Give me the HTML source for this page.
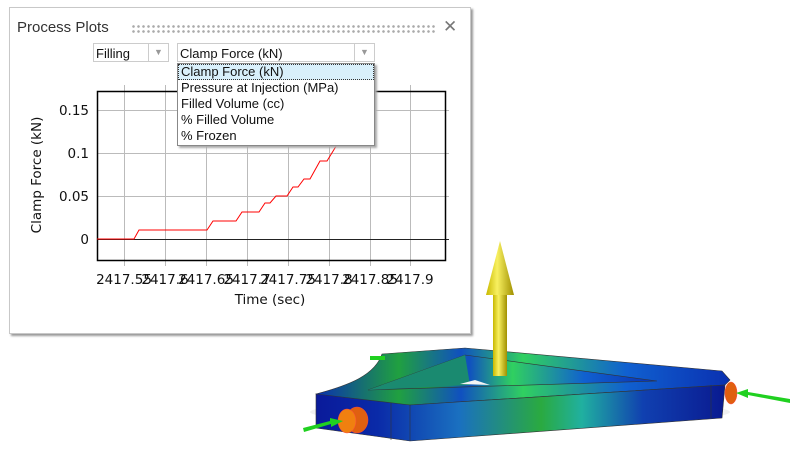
<!DOCTYPE html>
<html><head><style>
body{margin:0;width:797px;height:458px;background:#fff;position:relative;overflow:hidden;font-family:"DejaVu Sans","Liberation Sans",sans-serif;}
.panel{position:absolute;left:9px;top:7px;width:460px;height:325px;background:#fff;border:1px solid #c8c8c8;box-shadow:2px 2px 2px #999;}
.title{position:absolute;left:17px;top:19px;font-size:15px;color:#333;font-family:"Liberation Sans",sans-serif;}
.dots{position:absolute;left:131px;top:24px;width:304px;height:10px;background-image:radial-gradient(circle,#aaa 1.1px,transparent 1.5px);background-size:5px 5px;}
.x{position:absolute;left:443px;top:17px;font-size:17px;color:#777;font-family:"Liberation Sans",sans-serif;}
.sel{position:absolute;height:19px;border:1px solid #ccc;background:#fff;font-family:"Liberation Sans",sans-serif;font-size:13px;line-height:19px;padding-left:2px;box-sizing:border-box;color:#111}
.arr{position:absolute;right:0;top:0;width:19px;height:17px;border-left:1px solid #ccc;color:#999;font-size:9px;text-align:center;line-height:17px}
.dd{position:absolute;left:177px;top:63px;width:198px;height:83px;background:#fff;border:1px solid #888;box-shadow:2px 2px 2px #aaa;font-family:"Liberation Sans",sans-serif;font-size:13px;color:#111;box-sizing:border-box}
.dd div{height:16px;line-height:15px;padding-left:3px}
.dd .hl{background:#d9f0fb;outline:1px dotted #333;outline-offset:-1px}
</style></head><body>
<div class="panel"></div>
<div class="title">Process Plots</div>
<div class="dots"></div>
<div class="x">✕</div>
<div class="sel" style="left:93px;top:43px;width:76px">Filling<div class="arr">▼</div></div>
<div class="sel" style="left:177px;top:43px;width:198px">Clamp Force (kN)<div class="arr">▼</div></div>
<svg style="position:absolute;left:0;top:0" width="797" height="458">
<g stroke="#bbb" stroke-width="1">
<line x1="124.5" y1="85" x2="124.5" y2="266"/><line x1="165.5" y1="85" x2="165.5" y2="266"/><line x1="206.5" y1="85" x2="206.5" y2="266"/><line x1="247.5" y1="85" x2="247.5" y2="266"/><line x1="288.5" y1="85" x2="288.5" y2="266"/><line x1="329.5" y1="85" x2="329.5" y2="266"/><line x1="370.5" y1="85" x2="370.5" y2="266"/><line x1="410.5" y1="85" x2="410.5" y2="266"/>
<line x1="97" y1="110.5" x2="449" y2="110.5"/><line x1="97" y1="153.5" x2="449" y2="153.5"/><line x1="97" y1="196.5" x2="449" y2="196.5"/>
</g>
<line x1="97" y1="239.5" x2="449" y2="239.5" stroke="#222"/>
<rect x="97.5" y="91.5" width="348" height="169" fill="none" stroke="#000" stroke-width="1.5"/>
<polyline fill="none" stroke="#f00" stroke-width="1" points="97,239 134,239 139,230 207,230 213,221 236,221 242,212 259,212 265,203 270,203 276,196 287,196 293,187 298,187 304,179 310,179 320,161 327,161 338,143 340,140"/>
<g font-size="13.5" fill="#111" text-anchor="end"><text x="89" y="115">0.15</text><text x="89" y="158">0.1</text><text x="89" y="201">0.05</text><text x="89" y="244">0</text></g>
<g font-size="13.5" fill="#111" text-anchor="middle"><text x="124" y="284">2417.55</text><text x="165" y="284">2417.6</text><text x="206" y="284">2417.65</text><text x="247" y="284">2417.7</text><text x="288" y="284">2417.75</text><text x="329" y="284">2417.8</text><text x="370" y="284">2417.85</text><text x="410" y="284">2417.9</text></g>
<text x="270" y="304" font-size="13.5" text-anchor="middle" fill="#111">Time (sec)</text>
<text transform="translate(41,175) rotate(-90)" font-size="13.5" text-anchor="middle" fill="#111">Clamp Force (kN)</text>
<defs>
<linearGradient id="bl" x1="0" x2="1"><stop offset="0" stop-color="#0a1a9a"/><stop offset=".15" stop-color="#0a2aa8"/><stop offset=".35" stop-color="#1a70c0"/><stop offset=".55" stop-color="#2aaa40"/><stop offset=".65" stop-color="#20b0a0"/><stop offset=".8" stop-color="#1040b0"/><stop offset="1" stop-color="#0a1a90"/></linearGradient>
<linearGradient id="tp" x1="0" x2="1"><stop offset="0" stop-color="#0a30b0"/><stop offset=".2" stop-color="#20a040"/><stop offset=".35" stop-color="#1050c0"/><stop offset=".5" stop-color="#30d060"/><stop offset=".75" stop-color="#1060d0"/><stop offset="1" stop-color="#0a30b0"/></linearGradient>
<linearGradient id="yl" x1="0" x2="1"><stop offset="0" stop-color="#c8b800"/><stop offset=".4" stop-color="#f8f060"/><stop offset="1" stop-color="#a09000"/></linearGradient>
</defs>
<ellipse cx="520" cy="412" rx="210" ry="12" fill="#f0f0f0"/>
<path d="M316,394 C350,385 375,375 382,354 L465,348 L722,371 L730,380 L725,385 L410,405 L330,400 Z" fill="url(#tp)" stroke="#333" stroke-width=".6"/>
<polygon points="368,390 465,355 657,381" fill="url(#tp)" stroke="#333" stroke-width=".6"/>
<polygon points="465,355 470,385 368,390" fill="#1a8a70"/>
<polygon points="460,384 475,380 490,385" fill="#f4f4f4"/>
<polygon points="316,394 410,405 725,385 722,418 410,441 316,428" fill="url(#bl)" stroke="#333" stroke-width=".6"/>
<line x1="410" y1="405" x2="410" y2="441" stroke="#333" stroke-width=".6"/>
<line x1="391" y1="403" x2="391" y2="440" stroke="#333" stroke-width=".6"/>
<line x1="711" y1="385" x2="711" y2="418" stroke="#333" stroke-width=".6"/>
<ellipse cx="357" cy="420" rx="11" ry="13" fill="#e06010" stroke="#f44" stroke-width=".5"/><ellipse cx="347" cy="421" rx="9" ry="12" fill="#f08010" stroke="#f44" stroke-width=".5"/>
<ellipse cx="731" cy="393" rx="6" ry="11" fill="#e06010" stroke="#f44" stroke-width=".5"/>
<polygon points="303,428 330,421 330,418 343,421 331,427 331,424 304,432" fill="#20d020"/>
<polygon points="790,399 748,392 748,389 736,393 748,398 748,395 790,403" fill="#20d020"/>
<polygon points="370,356 385,356 385,360 370,360" fill="#20d020"/>
<rect x="493" y="294" width="14" height="82" fill="url(#yl)"/>
<polygon points="500,241 486,295 514,295" fill="url(#yl)"/>
</svg>
<div class="dd"><div class="hl">Clamp Force (kN)</div><div>Pressure at Injection (MPa)</div><div>Filled Volume (cc)</div><div>% Filled Volume</div><div>% Frozen</div></div>
</body></html>
